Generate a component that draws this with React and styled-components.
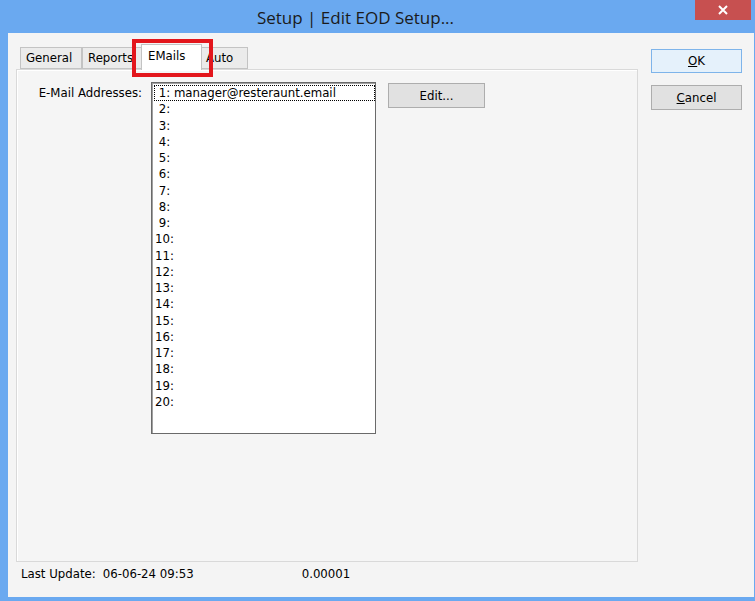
import React from "react";
import styled, { createGlobalStyle } from "styled-components";

const GlobalStyle = createGlobalStyle`
  html, body { margin: 0; padding: 0; }
  body { background: #6aa9f0; overflow: hidden; }
  * { box-sizing: border-box; }
`;

const Window = styled.div`
  width: 755px;
  height: 601px;
  display: flex;
  flex-direction: column;
  background: #6aa9f0;
  padding: 0 1px 4px 8px;
  font-family: "DejaVu Sans", Verdana, sans-serif;
  font-size: 11.75px;
  color: #000;
`;

const TitleBar = styled.div`
  height: 33px;
  display: flex;
  align-items: flex-start;
`;

const Title = styled.div`
  flex: 1;
  text-align: center;
  padding: 6px 0 0 8px;
  font-family: "Open Sans", "Noto Sans", sans-serif;
  font-size: 17px;
  line-height: 24px;
  color: #1b1b1b;
`;

const CloseButton = styled.div`
  width: 56px;
  height: 20px;
  margin-right: 3px;
  background: #c75050;
  display: flex;
  align-items: center;
  justify-content: center;
`;

const Client = styled.div`
  flex: 1;
  background: #f4f4f4;
  display: flex;
  padding: 11px 12px 0 8px;
`;

const LeftCol = styled.div`
  width: 622px;
  display: flex;
  flex-direction: column;
`;

const TabStrip = styled.div`
  height: 25px;
  display: flex;
  align-items: flex-end;
  padding-left: 4px;
  position: relative;
  z-index: 1;
`;

const Tab = styled.div`
  position: relative;
  width: ${(p) => p.$w}px;
  height: ${(p) => (p.$active ? 26 : 22)}px;
  margin: ${(p) => (p.$active ? "0 -2px -1px -2px" : "0")};
  background: ${(p) => (p.$active ? "#ffffff" : "#ebebeb")};
  border: 1px solid #c3c3c3;
  border-bottom: ${(p) => (p.$active ? "none" : "1px solid #c3c3c3")};
  z-index: ${(p) => (p.$active ? 2 : 1)};
  padding: ${(p) => (p.$active ? "3px 0 0 6px" : "2px 0 0 5px")};
  line-height: 16px;
  white-space: nowrap;
  overflow: visible;
`;

const Highlight = styled.div`
  position: absolute;
  left: -10px;
  right: -12px;
  top: -6px;
  bottom: -7px;
  border: 4px solid #e3161c;
  pointer-events: none;
`;

const Panel = styled.div`
  height: 493px;
  background: #f5f5f5;
  border: 1px solid #d9d9d9;
  box-shadow: inset 1px 1px 0 #ffffff;
  padding: 12px 0 0 19px;
`;

const FieldRow = styled.div`
  display: flex;
  align-items: flex-start;
`;

const Label = styled.div`
  width: 115px;
  padding-right: 9px;
  margin-top: 4px;
  line-height: 14px;
  text-align: right;
  white-space: nowrap;
`;

const ListBox = styled.div`
  width: 225px;
  height: 352px;
  background: #ffffff;
  border: 1px solid #6a6a6a;
  box-shadow: inset 1px 1px 0 #a0a0a0;
  padding: 2px 0 0 1px;
  overflow: hidden;
`;

const ListItem = styled.div`
  height: 16.25px;
  line-height: 14.25px;
  margin-left: 1px;
  border: 1px ${(p) => (p.$focus ? "dotted #000" : "solid transparent")};
  white-space: pre;
`;

const PushButton = styled.div`
  width: ${(p) => p.$w}px;
  height: ${(p) => p.$h}px;
  margin-top: ${(p) => p.$mt || 0}px;
  margin-left: ${(p) => p.$ml || 0}px;
  background: ${(p) => (p.$default ? "#e5f1fb" : "#e1e1e1")};
  border: 1px solid ${(p) => (p.$default ? "#7eb4ea" : "#adadad")};
  display: flex;
  align-items: center;
  justify-content: center;
  line-height: 14px;
  flex-shrink: 0;
`;

const Mnemonic = styled.span`
  text-decoration: underline;
`;

const Footer = styled.div`
  display: flex;
  padding: 5px 0 0 5px;
  line-height: 14px;
  white-space: pre;
`;

const FooterValue = styled.span`
  margin-left: ${(p) => p.$ml}px;
`;

const RightCol = styled.div`
  margin-left: 13px;
  padding-top: 5px;
  display: flex;
  flex-direction: column;
  gap: 12px;
`;

const tabs = [
  { label: "General", w: 62 },
  { label: "Reports", w: 61 },
  { label: "EMails", w: 61, active: true },
  { label: "Auto", w: 48 },
];

const items = Array.from({ length: 20 }, (_, i) => {
  const n = i + 1;
  const pre = n < 10 ? " " : "";
  return `${pre}${n}:${n === 1 ? " manager@resteraunt.email" : ""}`;
});

export default function App() {
  return (
    <>
      <GlobalStyle />
      <Window>
        <TitleBar>
          <Title>Setup | Edit EOD Setup...</Title>
          <CloseButton>
            <svg width="10" height="10" viewBox="0 0 10 10">
              <path d="M1 1 L9 9 M9 1 L1 9" stroke="#fff" strokeWidth="2" />
            </svg>
          </CloseButton>
        </TitleBar>
        <Client>
          <LeftCol>
            <TabStrip>
              {tabs.map((t) => (
                <Tab key={t.label} $w={t.w} $active={t.active}>
                  {t.label}
                  {t.active && <Highlight />}
                </Tab>
              ))}
            </TabStrip>
            <Panel>
              <FieldRow>
                <Label>E-Mail Addresses:</Label>
                <ListBox>
                  {items.map((s, i) => (
                    <ListItem key={i} $focus={i === 0}>
                      {s}
                    </ListItem>
                  ))}
                </ListBox>
                <PushButton $w={97} $h={25} $ml={12} $mt={1}>
                  Edit...
                </PushButton>
              </FieldRow>
            </Panel>
            <Footer>
              Last Update:
              <FooterValue $ml={7}>06-06-24 09:53</FooterValue>
              <FooterValue $ml={108}>0.00001</FooterValue>
            </Footer>
          </LeftCol>
          <RightCol>
            <PushButton $w={91} $h={24} $default>
              <span>
                <Mnemonic>O</Mnemonic>K
              </span>
            </PushButton>
            <PushButton $w={91} $h={25}>
              <span>
                <Mnemonic>C</Mnemonic>ancel
              </span>
            </PushButton>
          </RightCol>
        </Client>
      </Window>
    </>
  );
}
